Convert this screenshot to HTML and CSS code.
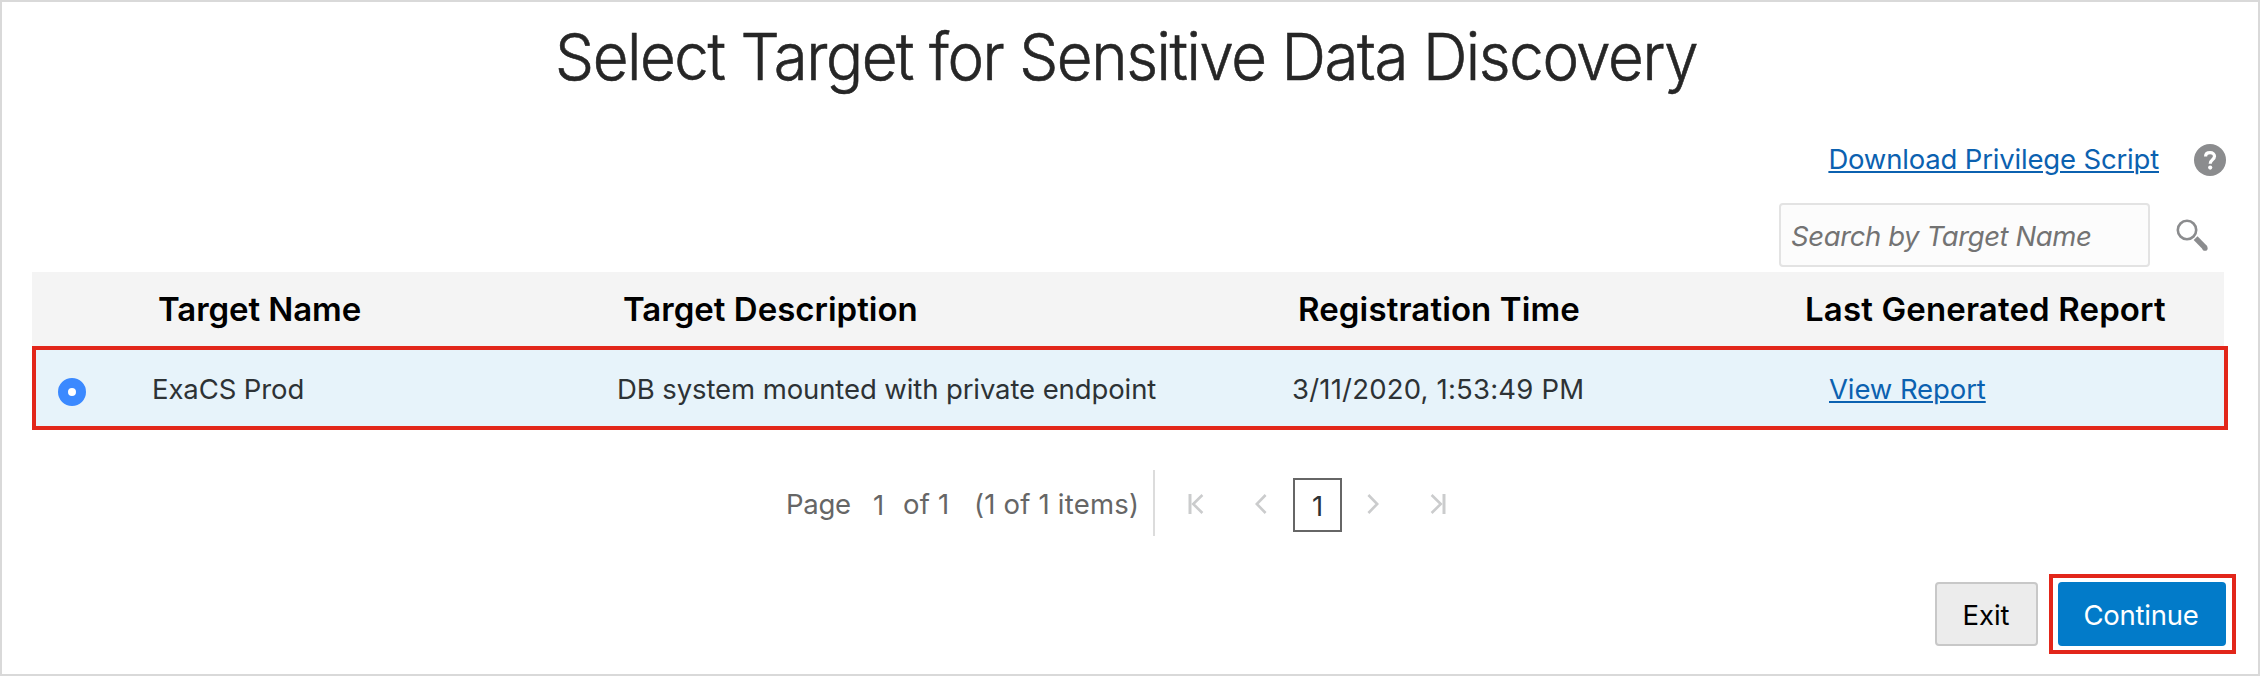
FILE: index.html
```html
<!DOCTYPE html>
<html lang="en">
<head>
<meta charset="utf-8">
<title>Select Target for Sensitive Data Discovery</title>
<link rel="stylesheet" href="styles.css">
</head>
<body>
<main class="page">
  <h1 class="title"><span class="title-text">Select Target for Sensitive Data Discovery</span></h1>

  <div class="links">
    <a class="link download" href="#">Download Privilege Script</a>
    <svg class="help" width="32" height="32" viewBox="0 0 32 32" aria-label="Help">
      <circle cx="16" cy="16" r="16" fill="#8b8c8e"/>
      <path d="M11.6 12.4C11.6 9.9 13.5 8.6 16.1 8.6C18.7 8.6 20.5 10.1 20.5 12.2C20.5 14.1 19.4 14.9 18.2 15.9C16.9 16.9 16.2 17.5 16.2 19.7" fill="none" stroke="#fff" stroke-width="3.2"/>
      <circle cx="16.2" cy="23.6" r="2.1" fill="#fff"/>
    </svg>
  </div>

  <div class="search">
    <input class="search-input" type="text" placeholder="Search by Target Name">
    <svg class="search-icon" width="32" height="34" viewBox="0 0 32 34" aria-label="Search">
      <circle cx="11" cy="11" r="9.2" fill="none" stroke="#8b8c8e" stroke-width="2.6"/>
      <path d="M19.6 19.2L29.4 29.2" stroke="#8b8c8e" stroke-width="5.4"/>
      <circle cx="29" cy="29.2" r="2.6" fill="#8b8c8e"/>
    </svg>
  </div>

  <section class="table">
    <div class="row head">
      <span></span>
      <span class="th name">Target Name</span>
      <span class="th desc">Target Description</span>
      <span class="th time">Registration Time</span>
      <span class="th report">Last Generated Report</span>
    </div>
    <div class="row selected">
      <span class="pick"><span class="radio"></span></span>
      <span class="td name">ExaCS Prod</span>
      <span class="td desc">DB system mounted with private endpoint</span>
      <span class="td time">3/11/2020, 1:53:49 PM</span>
      <span class="td report"><a class="link" href="#">View Report</a></span>
    </div>
  </section>

  <nav class="pager">
    <div class="pager-info">
      <span class="pager-label">Page</span>
      <span class="pager-input">1</span>
      <span class="pager-of">of 1</span>
      <span class="pager-items">(1 of 1 items)</span>
    </div>
    <div class="pager-nav">
      <svg class="first" width="16" height="20" viewBox="0 0 16 20"><path d="M2 0V20" stroke-width="3"/><path d="M14.4 1L5.2 10L14.4 19" stroke-width="2.6"/></svg>
      <svg class="prev" width="12" height="20" viewBox="0 0 12 20"><path d="M10.6 1L1.8 10L10.6 19" stroke-width="2.6"/></svg>
      <span class="current">1</span>
      <svg class="next" width="12" height="20" viewBox="0 0 12 20"><path d="M1.4 1L10.2 10L1.4 19" stroke-width="2.6"/></svg>
      <svg class="last" width="16" height="20" viewBox="0 0 16 20"><path d="M14 0V20" stroke-width="3"/><path d="M1.6 1L10.8 10L1.6 19" stroke-width="2.6"/></svg>
    </div>
  </nav>

  <footer class="actions">
    <button class="btn">Exit</button>
    <div class="highlight"><button class="btn primary">Continue</button></div>
  </footer>
</main>
</body>
</html>
```

FILE: styles.css
```css
* {
  box-sizing: border-box;
}

body {
  margin: 0;
  background: #fff;
  font-family: Inter, "Liberation Sans", sans-serif;
  font-size: 27.5px;
  color: #2d3235;
}

.page {
  width: 2260px;
  height: 676px;
  border: 2px solid #d9d9d9;
  padding: 0 32px 0 30px;
  overflow: hidden;
}

.title {
  margin: 0;
  height: 109px;
  padding-right: 6px;
  line-height: 109px;
  font-size: 65px;
  font-weight: 300;
  color: #262626;
  text-align: center;
  white-space: nowrap;
}

.title-text {
  display: inline-block;
  letter-spacing: -1.5px;
  transform: scaleX(0.95);
  -webkit-text-stroke: 0.6px #262626;
}

.links {
  display: flex;
  align-items: center;
  justify-content: flex-end;
  gap: 35px;
  height: 92px;
  padding: 4px 0 0 0;
}

.link {
  color: #0b61b0;
  text-decoration: underline;
  text-decoration-thickness: 2px;
  text-underline-offset: 2px;
  letter-spacing: -0.1px;
}

.download {
  letter-spacing: -0.18px;
}

.help {
  position: relative;
  top: 1px;
}

.search {
  display: flex;
  align-items: center;
  justify-content: flex-end;
  gap: 26px;
  height: 64px;
  padding-right: 18px;
}

.search-icon {
  margin-top: 2px;
}

.search-input {
  width: 371px;
  height: 64px;
  border: 2px solid #e3e3e3;
  border-radius: 4px;
  background: #fcfcfc;
  padding: 2px 10px 0;
  font: italic 27.5px Inter, sans-serif;
  letter-spacing: -0.4px;
}

.search-input::placeholder {
  color: #737373;
  opacity: 1;
}

.table {
  margin-top: 5px;
  width: 2196px;
}

.row {
  display: grid;
  grid-template-columns: 119px 465px 675px 507px 1fr;
  align-items: center;
  white-space: nowrap;
}

.head {
  width: 2192px;
  height: 74px;
  background: #f4f4f4;
  font-size: 33px;
  font-weight: 600;
  color: #000;
}

.head .name {
  padding-left: 7px;
  letter-spacing: -0.08px;
}

.head .desc {
  padding-left: 7px;
  letter-spacing: 0;
}

.head .time {
  padding-left: 7px;
  letter-spacing: 0.12px;
}

.head .report {
  padding-left: 7px;
  letter-spacing: 0.14px;
}

.selected {
  height: 84px;
  padding-top: 2px;
  border: 4px solid #e2261a;
  background: #e7f3fa;
  grid-template-columns: 115px 465px 675px 507px 1fr;
}

.selected .name {
  padding-left: 1px;
  letter-spacing: -0.1px;
}

.selected .desc {
  padding-left: 1px;
  letter-spacing: -0.1px;
}

.selected .time {
  padding-left: 1px;
  letter-spacing: 0.2px;
}

.selected .report {
  padding-left: 31px;
}

.pick {
  padding: 5px 0 0 22px;
}

.radio {
  display: block;
  width: 28px;
  height: 28px;
  border: 10px solid #3b89ff;
  border-radius: 50%;
  background: #fff;
}

.pager {
  display: flex;
  align-items: center;
  height: 66px;
  margin: 40px 0 0 754px;
  color: #666;
  white-space: nowrap;
}

.pager-info {
  display: flex;
  align-items: center;
  height: 66px;
  width: 369px;
  padding-top: 2px;
  border-right: 2px solid #dcdcdc;
}

.pager-label {
  width: 86px;
  letter-spacing: -0.3px;
}

.pager-input {
  width: 31px;
  padding: 1px 0 0 1px;
}

.pager-of {
  width: 71px;
  letter-spacing: 0.2px;
}

.pager-items {
  letter-spacing: 0.2px;
}

.pager-nav {
  display: flex;
  align-items: center;
  padding: 2px 0 0 33px;
}

.pager-nav svg {
  fill: none;
  stroke: #cbcccd;
}

.prev {
  margin-left: 51px;
}

.current {
  width: 49px;
  height: 54px;
  margin: 2px 25px 0 26px;
  border: 2px solid #666;
  color: #2d3235;
  line-height: 52px;
  text-align: center;
}

.last {
  margin-left: 51px;
}

.actions {
  display: flex;
  align-items: center;
  justify-content: flex-end;
  gap: 11px;
  margin-top: 38px;
  margin-right: -10px;
}

.btn {
  width: 103px;
  height: 64px;
  padding: 1px 1px 0 0;
  border: 2px solid #c8c8c8;
  border-radius: 4px;
  background: #ececec;
  color: #000;
  font: 27.5px Inter, sans-serif;
}

.highlight {
  width: 187px;
  height: 80px;
  padding: 4px 6px 4px 5px;
  border: 4px solid #e2261a;
}

.primary {
  display: block;
  width: 168px;
  padding-right: 2px;
  border: 0;
  background: #027bc9;
  color: #fff;
  letter-spacing: -0.25px;
}
```
